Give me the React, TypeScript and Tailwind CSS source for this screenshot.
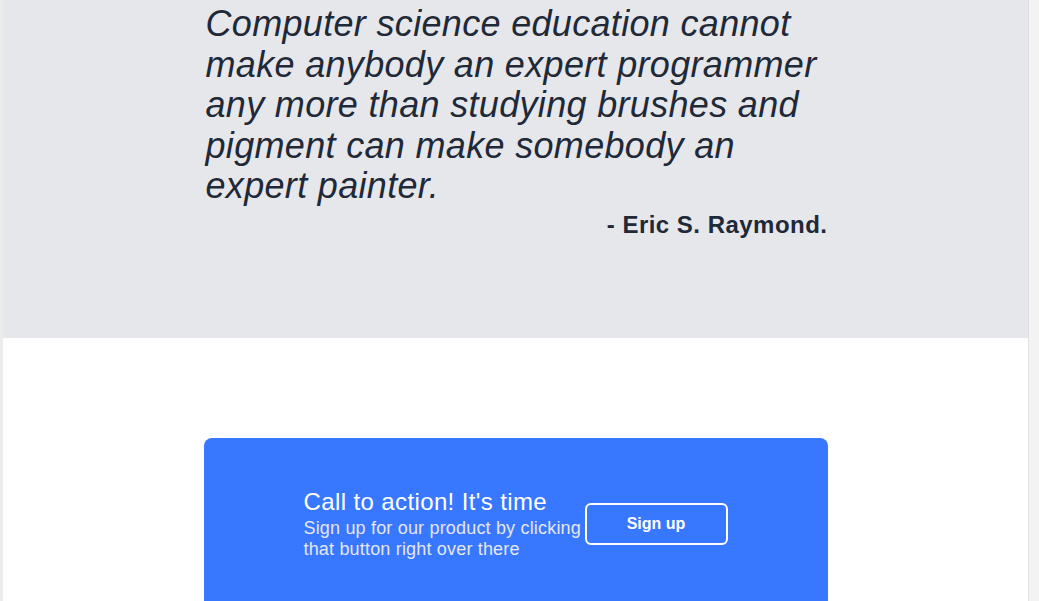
import React from 'react';

export default function App() {
  return (
    <div className="flex h-screen overflow-hidden bg-white font-['Liberation_Sans',Arial,sans-serif]">
      {/* left edge */}
      <div className="w-[3px] shrink-0 bg-[#ececec]" />

      <main className="flex-1">
        {/* Quote */}
        <section className="h-[338px] bg-[#e5e7eb]">
          <div className="mx-auto max-w-2xl px-6 pt-1 text-[#1f2937]">
            <p className="pl-0.5 text-4xl leading-[40.5px] tracking-[0.009em] italic">
              Computer science education cannot make anybody an expert programmer any more than studying brushes and pigment can make somebody an expert painter.
            </p>
            <p className="mt-[2px] text-right text-2xl font-bold tracking-[0.02em]">- Eric S. Raymond.</p>
          </div>
        </section>

        {/* Call to action */}
        <section className="pt-[100px]">
          <div className="mx-auto max-w-2xl px-6">
            <div className="flex h-[220px] items-start justify-center rounded-lg bg-[#3877ff] pt-12">
              <div className="w-[281px] text-white">
                <h2 className="text-2xl tracking-[0.016em]">Call to action! It's time</h2>
                <p className="text-lg leading-[21px] tracking-[0.01em] text-[#e5e7eb]">
                  Sign up for our product by clicking that button right over there
                </p>
              </div>
              <button className="mt-[17px] h-[42px] w-[143px] rounded-md border-2 border-white text-base font-bold text-white">
                Sign up
              </button>
            </div>
          </div>
        </section>
      </main>

      {/* right edge */}
      <div className="w-[11px] shrink-0 border-l border-[#e0e0e0] bg-[#f3f3f3]" />
    </div>
  );
}
